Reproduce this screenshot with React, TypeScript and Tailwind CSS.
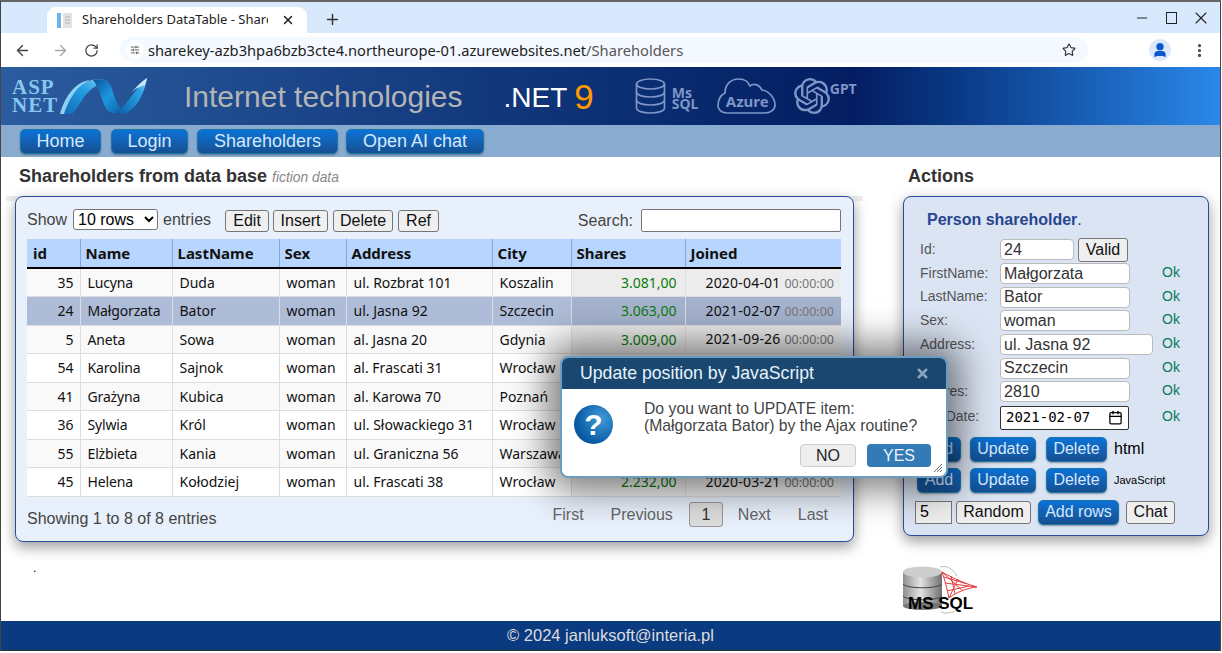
import { ArrowLeft, ArrowRight, RotateCw, Star, X, Plus, Minus, EllipsisVertical, SlidersHorizontal, Calendar, User } from 'lucide-react';
import { SiOpenai } from 'react-icons/si';

const rows = [
  { id: 35, name: 'Lucyna', last: 'Duda', address: 'ul. Rozbrat 101', city: 'Koszalin', shares: '3.081,00', joined: '2020-04-01', bg: 'bg-[#f9f9f9]' },
  { id: 24, name: 'Małgorzata', last: 'Bator', address: 'ul. Jasna 92', city: 'Szczecin', shares: '3.063,00', joined: '2021-02-07', bg: 'bg-[#aebcd8]' },
  { id: 5, name: 'Aneta', last: 'Sowa', address: 'al. Jasna 20', city: 'Gdynia', shares: '3.009,00', joined: '2021-09-26', bg: 'bg-[#f9f9f9]' },
  { id: 54, name: 'Karolina', last: 'Sajnok', address: 'al. Frascati 31', city: 'Wrocław', shares: '2.871,00', joined: '2020-11-12', bg: 'bg-white' },
  { id: 41, name: 'Grażyna', last: 'Kubica', address: 'al. Karowa 70', city: 'Poznań', shares: '2.810,00', joined: '2021-05-18', bg: 'bg-[#f9f9f9]' },
  { id: 36, name: 'Sylwia', last: 'Król', address: 'ul. Słowackiego 31', city: 'Wrocław', shares: '2.544,00', joined: '2020-08-03', bg: 'bg-white' },
  { id: 55, name: 'Elżbieta', last: 'Kania', address: 'ul. Graniczna 56', city: 'Warszawa', shares: '2.390,00', joined: '2021-01-22', bg: 'bg-[#f9f9f9]' },
  { id: 45, name: 'Helena', last: 'Kołodziej', address: 'ul. Frascati 38', city: 'Wrocław', shares: '2.232,00', joined: '2020-03-21', bg: 'bg-white' },
];

const formRows = [
  { label: 'FirstName:', value: 'Małgorzata', w: 'w-[130px]' },
  { label: 'LastName:', value: 'Bator', w: 'w-[130px]' },
  { label: 'Sex:', value: 'woman', w: 'w-[130px]' },
  { label: 'Address:', value: 'ul. Jasna 92', w: 'w-[153px]' },
  { label: 'City:', value: 'Szczecin', w: 'w-[130px]' },
  { label: 'Shares:', value: '2810', w: 'w-[130px]' },
];

const blueBtn = 'h-[25px] rounded-[5px] border border-[#1a78a8] bg-gradient-to-b from-[#0a72d6] to-[#155092] text-[16px] leading-none text-[#d5e8fd] shadow-[0_1px_2px_rgba(0,0,0,0.35)]';
const grayBtn = 'h-[22px] rounded-[3px] border border-[#767676] bg-[#efefef] text-[16px] leading-none text-[#111]';
const field = 'h-[21px] rounded-[4px] border border-[#bbb] bg-white pl-[3px] text-[16px] leading-none text-[#333]';

function BrowserChrome() {
  return (
    <div className="font-['Noto_Sans',sans-serif] shrink-0">
      <div className="flex h-[31px] items-end bg-[#d8e9fd] pl-[46px]">
        <div className="flex h-[26px] w-[260px] items-center rounded-t-[9px] bg-white pl-[10px]">
          <svg width="16" height="17" viewBox="0 0 16 17">
            <rect x="0" y="1" width="4" height="15" fill="#6fb1e8" />
            <rect x="6" y="1" width="9" height="15" fill="#e3e3e3" />
            <path d="M8 5h5M8 8h5M8 11h5" stroke="#b5b5b5" />
          </svg>
          <span className="ml-[9px] w-[186px] overflow-hidden whitespace-nowrap text-[13px] text-[#222]">Shareholders DataTable - Share</span>
          <X size={14} strokeWidth={2.5} className="ml-[13px] text-[#222]" />
        </div>
        <Plus size={17} strokeWidth={2} className="mb-[5px] ml-[17px] text-[#333]" />
        <div className="mb-[5px] ml-auto flex items-center pr-[9px] text-[#222]">
          <Minus size={16} strokeWidth={1.5} />
          <span className="ml-[16px] h-[12px] w-[11px] border-[1.5px] border-[#222]" />
          <X size={20} strokeWidth={1.3} className="ml-[14px]" />
        </div>
      </div>
      <div className="flex h-[34px] items-center bg-white pl-[13px]">
        <ArrowLeft size={17} strokeWidth={2} className="text-[#444]" />
        <ArrowRight size={17} strokeWidth={2} className="ml-[21px] text-[#a8a8a8]" />
        <RotateCw size={15} strokeWidth={2} className="ml-[15px] text-[#444]" />
        <div className="ml-[21px] flex h-[26px] w-[968px] items-center rounded-full bg-[#f4f9ff] pl-[6px]">
          <span className="flex h-[18px] w-[18px] items-center justify-center rounded-full bg-white">
            <SlidersHorizontal size={10} className="text-[#444]" />
          </span>
          <span className="ml-[4px] whitespace-nowrap text-[14.7px] text-[#222]">
            sharekey-azb3hpa6bzb3cte4.northeurope-01.azurewebsites.net<span className="text-[#555]">/Shareholders</span>
          </span>
          <Star size={14} strokeWidth={2} className="ml-auto mr-[12px] text-[#333]" />
        </div>
        <span className="ml-[61px] flex h-[22px] w-[22px] items-center justify-center rounded-full bg-[#dbe8fb]">
          <User size={16} strokeWidth={3} className="text-[#0b57d0]" fill="#0b57d0" />
        </span>
        <EllipsisVertical size={17} strokeWidth={2.5} className="ml-[20px] text-[#444]" />
      </div>
    </div>
  );
}

function AspLogo() {
  return (
    <div className="flex items-center">
      <div className="w-[48px] font-['Liberation_Serif',serif] text-[21px] font-bold leading-[18px] tracking-[1px] text-[#86c6ef]">
        <div>ASP</div>
        <div>NET</div>
      </div>
      <svg width="88" height="38" viewBox="0 0 88 38">
        <defs>
          <linearGradient id="w1" x1="0" y1="1" x2="1" y2="0">
            <stop offset="0" stopColor="#0f6fb8" />
            <stop offset="0.6" stopColor="#27a0e4" />
            <stop offset="1" stopColor="#8fd4f5" />
          </linearGradient>
          <linearGradient id="w2" x1="0" y1="0" x2="1" y2="1">
            <stop offset="0" stopColor="#0a5298" />
            <stop offset="0.5" stopColor="#1d97de" />
            <stop offset="1" stopColor="#0b5da6" />
          </linearGradient>
          <linearGradient id="w3" x1="0" y1="1" x2="1" y2="0">
            <stop offset="0" stopColor="#0a5ea8" />
            <stop offset="0.7" stopColor="#2aa5e6" />
            <stop offset="1" stopColor="#a5dcf7" />
          </linearGradient>
        </defs>
        <path d="M0 37 C4 22 14 5 30 3 C20 8 10 24 6 37 Z" fill="#8fd0f2" />
        <path d="M4 37 C9 22 18 6 32 3 C40 1 46 3 48 5 C38 6 30 12 24 20 C20 26 16 33 12 37 Z" fill="url(#w1)" />
        <path d="M33 3 C42 1 50 3 52 12 C55 22 58 30 64 34 C58 37 50 37 47 33 C42 26 40 12 33 3 Z" fill="url(#w2)" />
        <path d="M56 35 C66 30 72 16 87 1 C85 14 78 31 66 36 C62 37 58 37 56 35 Z" fill="url(#w3)" />
        <path d="M72 15 C76 10 82 4 87 1 L85 8 C81 9 76 11 72 15 Z" fill="#c4e8fa" />
      </svg>
    </div>
  );
}

function TechIcons() {
  return (
    <div className="ml-[41px] flex items-center font-['Noto_Sans',sans-serif] text-[#7d96c6]">
      <svg width="31" height="36" viewBox="0 0 31 36" fill="none" stroke="currentColor" strokeWidth="1.7">
        <ellipse cx="15.5" cy="6" rx="14" ry="5" />
        <path d="M1.5 6v24c0 3 6 5 14 5s14-2 14-5V6" />
        <path d="M1.5 14c0 3 6 5 14 5s14-2 14-5M1.5 22c0 3 6 5 14 5s14-2 14-5" />
      </svg>
      <div className="ml-[6px] mt-[3px] w-[45px] text-[14px] font-bold leading-[11px]">
        <div>Ms</div>
        <div>SQL</div>
      </div>
      <div className="relative h-[36px] w-[59px]">
        <svg width="59" height="36" viewBox="0 0 59 36" fill="none" stroke="currentColor" strokeWidth="1.7">
          <path d="M10 35 C3 35 1 30 1 28 C1 22 4 17 8 15 C8 6 14 1 22 1 C27 1 31 3 33 8 C36 5 42 6 45 12 C52 13 58 20 58 27 C58 32 53 35 48 35 Z" />
        </svg>
        <span className="absolute left-[9px] top-[15px] text-[15px] font-bold leading-[17px]">Azure</span>
      </div>
      <SiOpenai size={36} className="ml-[18px]" />
      <span className="mb-[14px] text-[14px] font-bold leading-none">GPT</span>
    </div>
  );
}

function SiteHeader() {
  return (
    <div className="flex h-[58px] shrink-0 items-center bg-gradient-to-r from-[#2b5c9f] via-[#041d62] via-70% to-[#2b88ea] pl-[11px]">
      <AspLogo />
      <span className="ml-[36px] mt-[2px] whitespace-nowrap text-[30px] leading-none text-[#b4b4b4]">Internet technologies</span>
      <span className="ml-[41px] mt-[3px] text-[28px] leading-none text-white">.NET</span>
      <span className="ml-[7px] text-[35px] leading-none text-[#ff9a00]">9</span>
      <TechIcons />
    </div>
  );
}

function Nav() {
  return (
    <div className="flex h-[32px] shrink-0 items-center bg-[#8aabd0] pl-[19px]">
      <button className={`${blueBtn} w-[81px] text-[18px]`}>Home</button>
      <button className={`${blueBtn} ml-[10px] w-[77px] text-[18px]`}>Login</button>
      <button className={`${blueBtn} ml-[9px] w-[141px] text-[18px]`}>Shareholders</button>
      <button className={`${blueBtn} ml-[8px] w-[138px] text-[18px]`}>Open AI chat</button>
    </div>
  );
}

function DataPanel() {
  const th = "border-r border-[#7fa9e2] pl-[5px] text-left text-[15px] font-bold";
  const td = 'border-r border-b border-[#ddd] pl-[7px]';
  return (
    <div className="w-[862px] pl-[5px]">
      <div className="flex h-[39px] items-start pl-[13px] pt-[8px]">
        <h2 className="text-[18px] font-bold leading-[22px] text-[#333]">Shareholders from data base</h2>
        <span className="ml-[5px] mt-[2px] text-[13.8px] italic leading-[22px] text-[#888]">fiction data</span>
      </div>
      <div className="h-[5px] bg-[#eee]" />
      <div className="relative -mt-[5px] ml-[9px] h-[346px] w-[839px] rounded-[8px] border border-[#2b4c9b] bg-[#e8f0fb] pl-[11px] pr-[12px] pt-[12px] text-[16px] text-[#444] shadow-[0_5px_14px_rgba(0,0,0,0.4)]">
        <div className="flex h-[23px] items-center">
          <span className="-mt-[2px]">Show</span>
          <select defaultValue="10" className="-mt-[2px] ml-[6px] h-[21px] w-[85px] rounded-[3px] border border-[#767676] bg-white text-[16px] leading-none text-black">
            <option value="10">10 rows</option>
          </select>
          <span className="-mt-[2px] ml-[5px]">entries</span>
          <button className={`${grayBtn} ml-[14px] mt-[1px] w-[44px]`}>Edit</button>
          <button className={`${grayBtn} ml-[4px] mt-[1px] w-[55px]`}>Insert</button>
          <button className={`${grayBtn} ml-[5px] mt-[1px] w-[60px]`}>Delete</button>
          <button className={`${grayBtn} ml-[5px] mt-[1px] w-[41px]`}>Ref</button>
          <span className="ml-auto">Search:</span>
          <input readOnly className="ml-[8px] h-[23px] w-[200px] rounded-[2px] border border-[#767676] bg-white" />
        </div>
        <table className="mt-[7px] w-[814px] table-fixed border-collapse font-['Noto_Sans',sans-serif] text-[14px] text-[#111]">
          <thead>
            <tr className="h-[29px] border-b-2 border-black bg-[#b8d6fd]">
              <th className={`${th} w-[53px] pl-[6px]`}>id</th>
              <th className={`${th} w-[92px]`}>Name</th>
              <th className={`${th} w-[107px]`}>LastName</th>
              <th className={`${th} w-[67px]`}>Sex</th>
              <th className={`${th} w-[146px]`}>Address</th>
              <th className={`${th} w-[79px]`}>City</th>
              <th className={`${th} w-[114px]`}>Shares</th>
              <th className="pl-[5px] text-left text-[15px] font-bold">Joined</th>
            </tr>
          </thead>
          <tbody>
            {rows.map((r, i) => (
              <tr key={r.id} className={`h-[28.5px] ${r.bg} ${i === 7 ? 'border-b border-black' : ''}`}>
                <td className="border-r border-b border-[#ddd] pr-[6px] text-right">{r.id}</td>
                <td className={`${td} pl-[6px] tracking-[-0.15px]`}>{r.name}</td>
                <td className={td}>{r.last}</td>
                <td className={td}>woman</td>
                <td className={td}>{r.address}</td>
                <td className={`${td} whitespace-nowrap`}>{r.city}</td>
                <td className="border-r border-b border-[#ddd] bg-black/5 pr-[8px] text-right text-[#0a7a0a]">{r.shares}</td>
                <td className="border-b border-[#ddd] bg-black/5 pr-[7px] text-right tracking-[0.2px]">
                  {r.joined} <span className="text-[12.5px] tracking-normal text-[#777]">00:00:00</span>
                </td>
              </tr>
            ))}
          </tbody>
        </table>
        <div className="mt-[5px] flex h-[32px] items-center">
          <span className="mt-[3px]">Showing 1 to 8 of 8 entries</span>
          <div className="-mt-[6px] ml-auto flex items-center pr-[13px] text-[#666]">
            <span>First</span>
            <span className="ml-[27px]">Previous</span>
            <span className="ml-[16px] flex h-[25px] w-[34px] items-center justify-center rounded-[3px] border border-[#999] bg-[#ddd] text-[#333]">1</span>
            <span className="ml-[15px]">Next</span>
            <span className="ml-[27px]">Last</span>
          </div>
        </div>
      </div>
      <div className="ml-[27px] mt-[20px] h-[16px] text-[12px] leading-none text-black">.</div>
    </div>
  );
}

function MsSqlLogo() {
  return (
    <div className="relative mt-[29px] h-[50px] w-[76px]">
      <svg width="76" height="50" viewBox="0 0 76 50">
        <defs>
          <linearGradient id="cyl" x1="0" x2="1" y1="0" y2="0">
            <stop offset="0" stopColor="#8f8f8f" />
            <stop offset="0.45" stopColor="#e2e2e2" />
            <stop offset="1" stopColor="#6f6f6f" />
          </linearGradient>
        </defs>
        <rect x="0" y="7" width="39" height="34" fill="url(#cyl)" />
        <ellipse cx="19.5" cy="41" rx="19.5" ry="4" fill="#777" />
        <ellipse cx="19.5" cy="7" rx="19.5" ry="5.5" fill="#cdcdcd" />
        <path d="M0 19c4 5 35 5 39 0M0 31c4 5 35 5 39 0" stroke="#444" strokeWidth="1" fill="none" />
        <path d="M39 7 C48 12 60 18 74 22 C64 23 54 27 46 33 C44 24 42 15 39 7 Z" fill="#fff" stroke="#e63a3a" strokeWidth="1" />
        <path d="M39 7 L60 26 M46 33 L55 14 M42 18 L73 22 M48 11 L52 29 M41 12 L64 19 M44 26 L66 21" stroke="#e63a3a" strokeWidth="1" />
        <path d="M37 2 C44 0 50 4 54 11 M38 47 C42 49 48 48 52 46" stroke="#bbb" fill="none" />
      </svg>
      <span className="absolute left-[5px] top-[30px] text-[17px] font-bold leading-[18px] text-black">MS SQL</span>
    </div>
  );
}

function ActionsPanel() {
  return (
    <div className="ml-[40px] w-[306px]">
      <div className="flex h-[39px] items-start pl-[5px] pt-[8px]">
        <h2 className="text-[18px] font-bold leading-[22px] text-[#333]">Actions</h2>
      </div>
      <div className="h-[340px] w-[306px] rounded-[8px] border border-[#2b4c9b] bg-[#dbe4f3] pl-[16px] pt-[12px] text-[14px] text-[#555] shadow-[0_5px_14px_rgba(0,0,0,0.4)]">
        <div className="ml-[7px] h-[22px] text-[16px] font-bold leading-[22px] text-[#27468f]">
          Person shareholder<span className="font-normal">.</span>
        </div>
        <div className="mt-[7px] grid grid-cols-[80px_162px_auto] items-center auto-rows-[23.7px]">
          <span>Id:</span>
          <div className="flex items-center">
            <input readOnly value="24" className={`${field} w-[74px]`} />
            <button className={`${grayBtn} ml-[4px] h-[24px] w-[50px] rounded-[2px]`}>Valid</button>
          </div>
          <span />
          {formRows.map(f => [
            <span key={f.label} className="-mt-[1px]">{f.label}</span>,
            <input key={f.label + 'v'} readOnly value={f.value} className={`${field} ${f.w}`} />,
            <span key={f.label + 'ok'} className="-mt-[2px] text-[#0a7a5a]">Ok</span>,
          ])}
          <span className="mt-[2px]">JoinDate:</span>
          <div className="mt-[4px] flex h-[24px] w-[129px] items-center rounded-[2px] border border-[#333] bg-white pl-[5px] font-['DejaVu_Sans_Mono',monospace] text-[14px] text-black">
            2021-02-07
            <Calendar size={15} strokeWidth={2} className="ml-auto mr-[5px]" />
          </div>
          <span className="mt-[1px] text-[#0a7a5a]">Ok</span>
        </div>
        <div className="ml-[-3px] mt-[9px] flex items-center">
          <button className={`${blueBtn} w-[44px]`}>Add</button>
          <button className={`${blueBtn} ml-[9px] w-[66px]`}>Update</button>
          <button className={`${blueBtn} ml-[10px] w-[61px]`}>Delete</button>
          <span className="ml-[7px] text-[16px] text-black">html</span>
        </div>
        <div className="ml-[-3px] mt-[6px] flex items-center">
          <button className={`${blueBtn} w-[44px]`}>Add</button>
          <button className={`${blueBtn} ml-[9px] w-[66px]`}>Update</button>
          <button className={`${blueBtn} ml-[10px] w-[61px]`}>Delete</button>
          <span className="ml-[7px] text-[11px] text-black">JavaScript</span>
        </div>
        <div className="ml-[-5px] mt-[7px] flex items-center">
          <input readOnly value="5" className="h-[23px] w-[37px] border border-[#767676] bg-[#efefef] pl-[4px] text-[16px] text-black" />
          <button className={`${grayBtn} ml-[4px] h-[23px] w-[75px]`}>Random</button>
          <button className={`${blueBtn} ml-[7px] w-[81px]`}>Add rows</button>
          <button className={`${grayBtn} ml-[7px] h-[23px] w-[49px]`}>Chat</button>
        </div>
      </div>
      <MsSqlLogo />
    </div>
  );
}

function ConfirmDialog() {
  return (
    <div className="absolute left-[559px] top-[354px] z-10 h-[122px] w-[388px] overflow-hidden rounded-[8px] border-2 border-[#6c9cc0] bg-white shadow-[0_0_36px_12px_rgba(0,0,0,0.5)]">
      <div className="flex h-[31px] items-center bg-[#19476f] pl-[18px] pr-[16px]">
        <span className="text-[17.7px] leading-none text-[#e8f2fb]">Update position by JavaScript</span>
        <X size={15} strokeWidth={4} className="ml-auto text-[#8aa5bd]" />
      </div>
      <div className="relative flex h-[87px]">
        <div className="ml-[12px] mt-[16px] flex h-[39px] w-[39px] items-center justify-center rounded-full bg-[radial-gradient(circle_at_70%_35%,#3f9ad8,#0b5da6_65%,#084a88)] text-[30px] font-bold leading-none text-white">?</div>
        <div className="ml-[31px] mt-[11px] text-[15.75px] leading-[17px] text-[#444]">
          <div>Do you want to UPDATE item:</div>
          <div>(Małgorzata Bator) by the Ajax routine?</div>
        </div>
        <div className="absolute bottom-[9px] right-[15px] flex gap-[11px]">
          <button className="h-[23px] w-[56px] rounded-[4px] border border-[#ccc] bg-[#eee] text-[16px] leading-none text-[#222]">NO</button>
          <button className="h-[23px] w-[64px] rounded-[4px] bg-[#337ab7] text-[16px] leading-none text-[#eaf3fb]">YES</button>
        </div>
        <svg width="10" height="10" viewBox="0 0 10 10" className="absolute bottom-[3px] right-[3px]" stroke="#666">
          <path d="M9 1 L1 9 M9 4 L4 9 M9 7 L7 9" />
        </svg>
      </div>
    </div>
  );
}

export default function App() {
  return (
    <div className="relative flex h-[651px] w-[1221px] flex-col overflow-hidden border-x border-t-2 border-b border-x-[#444] border-t-[#666] border-b-[#333] bg-white font-['Liberation_Sans',Arial,sans-serif]">
      <BrowserChrome />
      <SiteHeader />
      <Nav />
      <div className="flex flex-1">
        <DataPanel />
        <ActionsPanel />
      </div>
      <footer className="flex h-[29px] shrink-0 items-center justify-center bg-[#0a3a80] text-[16.5px] text-[#ddd]">© 2024 janluksoft@interia.pl</footer>
      <ConfirmDialog />
    </div>
  );
}
